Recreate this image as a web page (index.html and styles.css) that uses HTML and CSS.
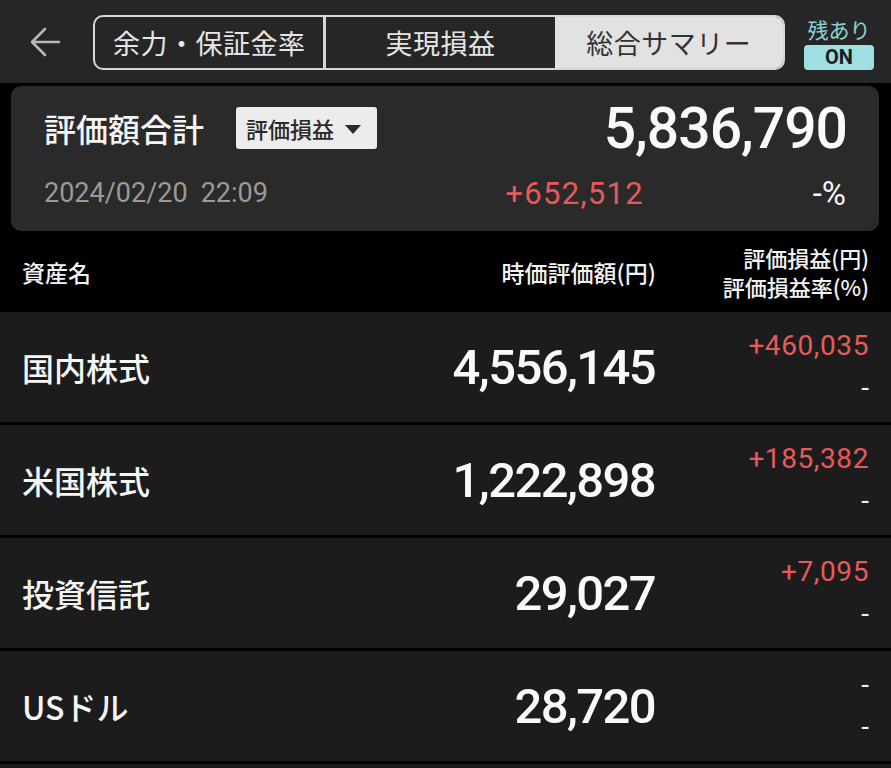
FILE: index.html
```html
<!DOCTYPE html>
<html lang="ja">
<head>
<meta charset="utf-8">
<title>総合サマリー</title>
<link rel="stylesheet" href="styles.css">
</head>
<body>
<header class="topbar">
  <button class="back" aria-label="戻る">
    <svg width="32" height="32" viewBox="0 0 32 32"><path d="M30 16H3M16 3 3 16l13 13" fill="none" stroke="#b9b9b9" stroke-width="2.6" stroke-linecap="round" stroke-linejoin="round"/></svg>
  </button>
  <nav class="segments">
    <div class="seg seg-first">余力・保証金率</div>
    <div class="seg">実現損益</div>
    <div class="seg seg-active">総合サマリー</div>
  </nav>
  <div class="status">
    <div class="status-label">残あり</div>
    <div class="status-badge">ON</div>
  </div>
</header>

<section class="card">
  <div class="card-row card-top">
    <div class="card-title">評価額合計</div>
    <div class="dropdown">評価損益<span class="caret"></span></div>
    <div class="total">5,836,790</div>
  </div>
  <div class="card-row card-bottom">
    <div class="date"><span>2024/02/20</span><span>22:09</span></div>
    <div class="gain">+652,512</div>
    <div class="pct">-%</div>
  </div>
</section>

<div class="table-head">
  <div class="th-name">資産名</div>
  <div class="th-amount">時価評価額(円)</div>
  <div class="th-pl">
    <div class="th-line">評価損益(円)</div>
    <div class="th-line">評価損益率(%)</div>
  </div>
</div>

<div class="rows">
  <div class="row">
    <div class="name">国内株式</div>
    <div class="amount">4,556,145</div>
    <div class="pl"><span class="plus">+460,035</span><span class="dash">-</span></div>
  </div>
  <div class="row">
    <div class="name">米国株式</div>
    <div class="amount">1,222,898</div>
    <div class="pl"><span class="plus">+185,382</span><span class="dash">-</span></div>
  </div>
  <div class="row">
    <div class="name">投資信託</div>
    <div class="amount">29,027</div>
    <div class="pl"><span class="plus">+7,095</span><span class="dash">-</span></div>
  </div>
  <div class="row">
    <div class="name">USドル</div>
    <div class="amount">28,720</div>
    <div class="pl"><span class="dash">-</span><span class="dash">-</span></div>
  </div>
  <div class="row row-peek"></div>
</div>
</body>
</html>
```

FILE: styles.css
```css
* { box-sizing: border-box; }

html, body {
  margin: 0;
  padding: 0;
  background: #000;
  color: #fff;
  font-family: "Noto Sans CJK JP", "Noto Sans", sans-serif;
}

body {
  height: 768px;
  overflow: hidden;
}

.topbar {
  display: flex;
  align-items: center;
  height: 83px;
  background: #262626;
  padding: 0 0 0 29px;
}

.back {
  background: none;
  border: 0;
  padding: 0;
  width: 32px;
  height: 32px;
  margin-right: 32px;
  display: flex;
}

.segments {
  display: flex;
  width: 692px;
  height: 55px;
  border: 2px solid #d6d6d6;
  border-radius: 10px;
  overflow: hidden;
  margin-top: 2px;
}

.seg {
  flex: 1;
  display: flex;
  align-items: center;
  justify-content: center;
  font-size: 27px;
  color: #e6e6e6;
  letter-spacing: 0.5px;
}

.seg-first {
  border-right: 3px solid #d6d6d6;
}

.seg-active {
  background: #e2e2e2;
  color: #333;
}

.status {
  display: flex;
  flex-direction: column;
  align-items: center;
  width: 70px;
  margin-left: 19px;
  margin-top: 2px;
}

.status-label {
  font-size: 21px;
  line-height: 26px;
  color: #8fcfd3;
}

.status-badge {
  width: 70px;
  height: 25px;
  margin-top: 3px;
  border-radius: 4px;
  background: #9fdfe1;
  color: #1d1d1d;
  font-family: Roboto, "Noto Sans", sans-serif;
  font-weight: 700;
  font-size: 20px;
  line-height: 25px;
  text-align: center;
}

.card {
  margin: 3px 12px 0 11px;
  height: 145px;
  background: #2a2a2a;
  border-radius: 10px;
  padding: 12px 33px 0;
}

.card-row {
  display: flex;
  align-items: center;
}

.card-top { height: 60px; }

.card-title {
  font-size: 32px;
  font-weight: 500;
  color: #f5f5f5;
}

.dropdown {
  margin-left: 32px;
  height: 42px;
  width: 141px;
  background: #ececec;
  border-radius: 3px;
  color: #2a2a2a;
  font-size: 22px;
  font-weight: 500;
  display: flex;
  align-items: center;
  padding-left: 10px;
}

.caret {
  width: 0;
  height: 0;
  border-left: 8px solid transparent;
  border-right: 8px solid transparent;
  border-top: 9px solid #2a2a2a;
  margin-left: 11px;
  margin-top: 2px;
}

.total {
  margin-left: auto;
  font-family: Roboto, sans-serif;
  font-weight: 500;
  font-size: 57px;
  letter-spacing: -1px;
  margin-right: -1px;
  color: #fafafa;
}

.card-bottom {
  height: 46px;
  margin-top: 12px;
  font-family: Roboto, sans-serif;
}

.date {
  flex: 1;
  display: flex;
  gap: 13px;
  font-size: 27px;
  color: #9a9a9a;
}

.gain {
  font-size: 31px;
  letter-spacing: 1.3px;
  color: #e85a5a;
}

.pct {
  width: 202px;
  text-align: right;
  font-size: 33px;
  color: #f5f5f5;
}

.table-head {
  display: flex;
  align-items: center;
  height: 81px;
  padding: 0 22px;
  font-size: 23px;
  font-weight: 500;
  color: #f2f2f2;
}

.th-name { flex: 1; }

.th-amount { text-align: right; }

.th-pl {
  width: 213px;
  display: flex;
  flex-direction: column;
  align-items: flex-end;
  gap: 0;
  font-size: 22px;
}

.th-line {
  height: 29px;
  line-height: 29px;
  overflow: visible;
  white-space: nowrap;
}

.rows {
  display: flex;
  flex-direction: column;
  gap: 3px;
}

.row {
  display: flex;
  align-items: center;
  height: 110px;
  flex: none;
  background: #1c1c1c;
  padding: 0 22px;
}

.row-peek { height: 4px; }

.name {
  flex: 1;
  font-size: 32px;
  font-weight: 500;
  color: #f5f5f5;
}

.amount {
  font-family: Roboto, sans-serif;
  font-weight: 500;
  font-size: 49px;
  letter-spacing: -1.6px;
  color: #fafafa;
}

.pl {
  width: 214px;
  display: flex;
  flex-direction: column;
  align-items: flex-end;
  font-family: Roboto, sans-serif;
  font-size: 28px;
  line-height: 42px;
}

.plus {
  color: #e85a5a;
  letter-spacing: 0.6px;
}

.dash { color: #f0f0f0; }
```
